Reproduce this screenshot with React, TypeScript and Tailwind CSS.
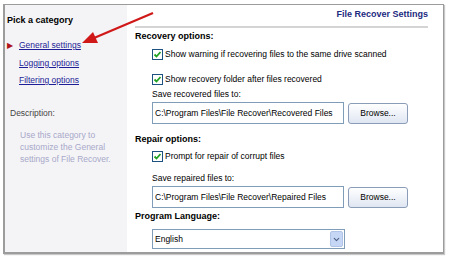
import { ChevronDown } from "lucide-react";

const font = { fontFamily: '"Liberation Sans", Arial, sans-serif' };

function Check() {
  return (
    <span className="w-[11px] h-[11px] border border-[#1c5180] bg-white flex items-center justify-center shrink-0">
      <svg width="9" height="9" viewBox="0 0 9 9">
        <path d="M1.5 4.5 L3.5 6.5 L7.5 2" stroke="#21a121" strokeWidth="1.8" fill="none" />
      </svg>
    </span>
  );
}

function PathRow({ value }: { value: string }) {
  return (
    <div className="flex items-center gap-[4px]">
      <div className="w-[192px] h-[22px] border border-[#7f9db9] bg-white flex items-center px-[2px] text-[8.5px] text-black whitespace-nowrap overflow-hidden">
        {value}
      </div>
      <button className="w-[60px] h-[21px] rounded-[3px] border border-[#8a9cb8] bg-gradient-to-b from-white to-[#dfe6f2] text-[8.5px] text-black">
        Browse...
      </button>
    </div>
  );
}

export default function App() {
  return (
    <div className="w-[450px] h-[259px] bg-white relative overflow-hidden" style={font}>
      <div className="ml-[3px] mt-[4px] w-[441px] h-[250px] border border-[#9c9c9c] border-l-2 border-b-2 shadow-[1px_1px_1px_#c8c8c8] flex">
        {/* left category panel */}
        <div className="w-[122px] bg-[#f4f4f7] flex flex-col pl-[2px] leading-[11px]">
          <div className="pt-[10px] text-[9px] font-bold text-black">Pick a category</div>
          <div className="mt-[14px] flex flex-col gap-[6.5px] text-[8.5px]">
            <div className="flex items-center">
              <span className="w-[12px] text-[#b0141a] text-[8px]">▶</span>
              <span className="text-[#1e1e96] underline">General settings</span>
            </div>
            <span className="pl-[12px] text-[#1e1e96] underline">Logging options</span>
            <span className="pl-[12px] text-[#1e1e96] underline">Filtering options</span>
          </div>
          <div className="mt-[22px] pl-[3px] text-[8.5px] text-[#444]">Description:</div>
          <div className="mt-[10px] pl-[13px] pr-[6px] text-[8.5px] leading-[12px] text-[#a8a8c8]">
            Use this category to customize the General settings of File Recover.
          </div>
        </div>

        {/* right settings panel */}
        <div className="flex-1 bg-white flex flex-col pl-[8px] pr-[15px] leading-[11px]">
          <div className="h-[23px] border-b-2 border-[#d4d4d4] flex items-end justify-end pb-[6px] text-[9px] font-bold text-[#1c2a80]">
            File Recover Settings
          </div>
          <div className="mt-[3px] text-[9px] font-bold text-black">Recovery options:</div>
          <div className="pl-[17px] text-[8.5px] text-black flex flex-col">
            <div className="mt-[7px] flex items-center gap-[2px]">
              <Check />
              <span>Show warning if recovering files to the same drive scanned</span>
            </div>
            <div className="mt-[14px] flex items-center gap-[2px]">
              <Check />
              <span>Show recovery folder after files recovered</span>
            </div>
            <div className="mt-[4px]">Save recovered files to:</div>
            <div className="mt-[2px]">
              <PathRow value="C:\Program Files\File Recover\Recovered Files" />
            </div>
          </div>
          <div className="mt-[10px] text-[9px] font-bold text-black">Repair options:</div>
          <div className="pl-[17px] text-[8.5px] text-black flex flex-col">
            <div className="mt-[6px] flex items-center gap-[2px]">
              <Check />
              <span>Prompt for repair of corrupt files</span>
            </div>
            <div className="mt-[11px]">Save repaired files to:</div>
            <div className="mt-[2px]">
              <PathRow value="C:\Program Files\File Recover\Repaired Files" />
            </div>
          </div>
          <div className="mt-[3px] text-[9px] font-bold text-black">Program Language:</div>
          <div className="pl-[17px] mt-[7px]">
            <div className="w-[193px] h-[20px] border border-[#7f9db9] bg-white flex items-center text-[8.5px] text-black">
              <span className="flex-1 px-[2px]">English</span>
              <span className="w-[13px] h-[16px] mr-[1px] rounded-[2px] bg-[#c6d6f5] border border-[#b0c4e8] flex items-center justify-center">
                <ChevronDown size={9} strokeWidth={3} color="#4d6185" />
              </span>
            </div>
          </div>
        </div>
      </div>

      {/* red annotation arrow */}
      <svg className="absolute left-0 top-0" width="450" height="259" viewBox="0 0 450 259">
        <line x1="153" y1="13" x2="94" y2="38" stroke="#d01818" strokeWidth="2.2" />
        <polygon points="82,43 93,32 98,43" fill="#d01818" />
      </svg>
    </div>
  );
}
